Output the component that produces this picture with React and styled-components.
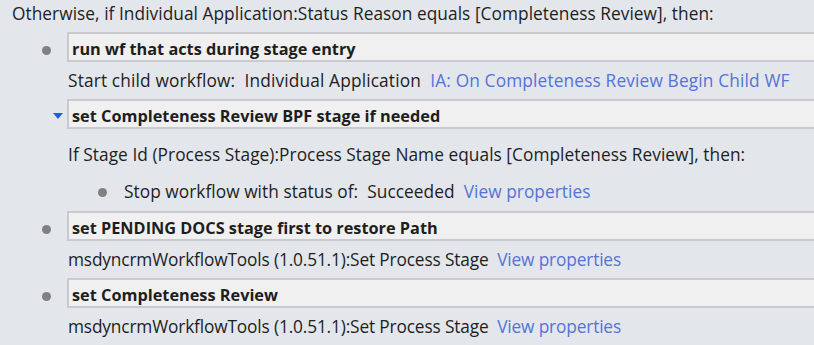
import React from "react";
import styled, { createGlobalStyle } from "styled-components";

const GlobalStyle = createGlobalStyle`
  html, body {
    margin: 0;
    padding: 0;
    background: #e3e6eb;
  }
  body {
    font-family: "Open Sans", "Noto Sans", sans-serif;
    color: #1e1e1e;
  }
`;

const Canvas = styled.div`
  width: 814px;
  height: 345px;
  overflow: hidden;
  background: #e3e6eb;
  font-size: 17.3px;
  letter-spacing: 0.05px;
`;

const Header = styled.div`
  height: 32px;
  padding-left: 12px;
  line-height: 28px;
  white-space: pre;
`;

const Step = styled.div`
  display: flex;
  flex-direction: column;
`;

const StepHead = styled.div`
  display: flex;
  align-items: center;
  height: 30px;
`;

const Marker = styled.div`
  width: ${(p) => p.$width || 67}px;
  flex: none;
  display: flex;
  align-items: center;
  padding-left: ${(p) => p.$pad || 0}px;
  padding-top: ${(p) => p.$top ?? 6}px;
  box-sizing: border-box;
`;

const Dot = styled.span`
  width: 9px;
  height: 9px;
  border-radius: 50%;
  background: #808080;
`;

const Caret = styled.span`
  width: 0;
  height: 0;
  border-left: 5px solid transparent;
  border-right: 5px solid transparent;
  border-top: 6px solid #1e5fd6;
  margin-top: -3px;
`;

const StepBox = styled.div`
  flex: 1;
  height: 30px;
  box-sizing: border-box;
  background: #f0f0f0;
  border: 2px solid #c8cacf;
  border-right: none;
  padding-left: 3px;
  font-size: 16.3px;
  letter-spacing: 0;
  font-weight: 700;
  line-height: 30px;
  white-space: pre;
`;

const Line = styled.div`
  height: 37px;
  line-height: 38px;
  padding-left: 68px;
  white-space: pre;
  letter-spacing: ${(p) => p.$spacing ?? 0.05}px;
`;

const Detail = styled.div`
  padding-top: ${(p) => p.$top || 0}px;
  padding-bottom: ${(p) => p.$bottom || 0}px;
`;

const NestedLine = styled.div`
  display: flex;
  align-items: center;
  height: 37px;
  white-space: pre;
`;

const Link = styled.span`
  color: #5573d6;
`;

const steps = [
  {
    title: "run wf that acts during stage entry",
    marker: "dot",
    detail: (
      <Line $spacing={0.15}>
        Start child workflow:{"  "}Individual Application{"  "}
        <Link>IA: On Completeness Review Begin Child WF</Link>
      </Line>
    ),
  },
  {
    title: "set Completeness Review BPF stage if needed",
    marker: "caret",
    detail: (
      <Detail $top={7} $bottom={1}>
        <Line>
          If Stage Id (Process Stage):Process Stage Name equals [Completeness
          Review], then:
        </Line>
        <NestedLine>
          <Marker $width={124} $pad={98} $top={2}>
            <Dot />
          </Marker>
          Stop workflow with status of:{"  "}Succeeded{"  "}
          <Link>View properties</Link>
        </NestedLine>
      </Detail>
    ),
  },
  {
    title: "set PENDING DOCS stage first to restore Path",
    marker: "dot",
    detail: (
      <Line $spacing={-0.15}>
        msdyncrmWorkflowTools (1.0.51.1):Set Process Stage{"  "}
        <Link>View properties</Link>
      </Line>
    ),
  },
  {
    title: "set Completeness Review",
    marker: "dot",
    detail: (
      <Line $spacing={-0.15}>
        msdyncrmWorkflowTools (1.0.51.1):Set Process Stage{"  "}
        <Link>View properties</Link>
      </Line>
    ),
  },
];

export default function App() {
  return (
    <Canvas>
      <GlobalStyle />
      <Header>
        Otherwise, if Individual Application:Status Reason equals [Completeness
        Review], then:
      </Header>
      {steps.map((step, i) => (
        <Step key={i}>
          <StepHead>
            {step.marker === "dot" ? (
              <Marker $pad={42}>
                <Dot />
              </Marker>
            ) : (
              <Marker $pad={53}>
                <Caret />
              </Marker>
            )}
            <StepBox>{step.title}</StepBox>
          </StepHead>
          {step.detail}
        </Step>
      ))}
    </Canvas>
  );
}
